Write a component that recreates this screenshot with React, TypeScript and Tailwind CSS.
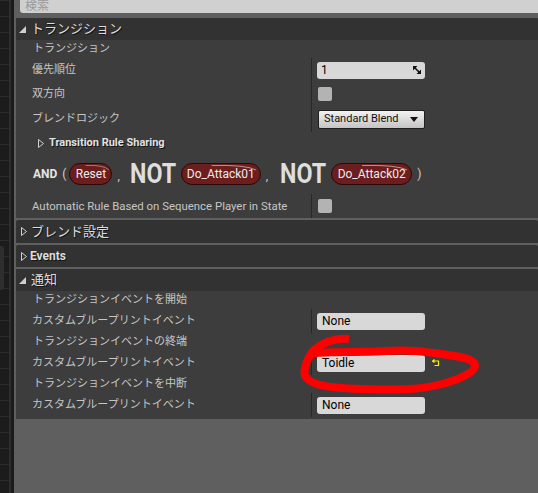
import type { ReactNode } from 'react'

const SHADOW = '[text-shadow:1px_1px_0_#151515]'

const MARK_POINTS: [number, number][] = [
  [349, 339], [337, 338], [313, 348], [303, 370], [307, 381], [330, 388],
  [393, 390], [427, 388], [457, 380], [475, 370], [475, 362], [463, 357],
  [427, 352], [403, 350], [370, 352], [337, 352], [313, 353],
]

function smoothPath(pts: [number, number][]) {
  let d = `M${pts[0][0]} ${pts[0][1]}`
  for (let i = 1; i < pts.length - 1; i++) {
    const [x, y] = pts[i]
    const mx = (x + pts[i + 1][0]) / 2
    const my = (y + pts[i + 1][1]) / 2
    d += ` Q${x} ${y} ${mx} ${my}`
  }
  const last = pts[pts.length - 1]
  return d + ` L${last[0]} ${last[1]}`
}

function OpenArrow() {
  return (
    <svg width="7" height="7" viewBox="0 0 7 7" className="shrink-0">
      <polygon points="7,0 7,7 0,7" fill="#cfcfcf" />
    </svg>
  )
}

function ClosedArrow() {
  return (
    <svg width="6" height="9" viewBox="0 0 6 9" className="shrink-0">
      <polygon points="0.5,0.5 5.5,4.5 0.5,8.5" fill="none" stroke="#cfcfcf" strokeWidth="1" />
    </svg>
  )
}

function SectionHeader({ title, open, bold, h = 'h-[22px]' }: { title: string; open?: boolean; bold?: boolean; h?: string }) {
  return (
    <div className={`flex ${h} items-center rounded-t-[2px] bg-[#323232] pl-[3px]`}>
      {open ? (
        <OpenArrow />
      ) : (
        <span className="ml-[2px] flex">
          <ClosedArrow />
        </span>
      )}
      <span
        className={`${open ? 'ml-[5px]' : bold ? 'ml-[3px]' : 'ml-[4px]'} ${
          bold ? 'text-[12px] font-bold' : 'text-[13px]'
        } text-[#dcdcdc] ${SHADOW}`}
      >
        {title}
      </span>
    </div>
  )
}

function PropRow({ label, h, children, labelSize = 'text-[11px]' }: { label: string; h: string; children?: ReactNode; labelSize?: string }) {
  return (
    <div className={`flex ${h}`}>
      <div className={`flex w-[295px] shrink-0 items-center pl-[16px] pt-[1px] ${labelSize} text-[#c6c6c6]`}>{label}</div>
      <div className="flex flex-1 items-center border-l border-[#272727] pl-[5px]">{children}</div>
    </div>
  )
}

function Checkbox() {
  return <div className="ml-[1px] h-[14px] w-[14px] rounded-[2px] bg-[#b3b3b3]" />
}

function ValueBox({ text }: { text: string }) {
  return (
    <div className="flex h-[17px] w-[108px] items-center rounded-[3px] bg-[#d8d8d8] pl-[5px] text-[12px] text-black">
      {text}
    </div>
  )
}

function Pill({ text, w }: { text: string; w: string }) {
  return (
    <div
      className={`relative flex h-[22px] ${w} items-center justify-center rounded-full border border-[#2a0808] bg-[#6c1d1d] text-[12px] leading-none text-[#ececec]`}
    >
      {text}
      <svg className="absolute inset-0 h-full w-full" viewBox="0 0 100 22" preserveAspectRatio="none">
        <path d="M38 1.6 Q82 0.8 95 6.5" fill="none" stroke="#e6d2d2" strokeOpacity="0.7" strokeWidth="1.1" />
      </svg>
    </div>
  )
}

function Not({ ml }: { ml: string }) {
  return (
    <span className={`${ml} inline-block w-[45px] overflow-visible whitespace-nowrap`}>
      <span className="inline-block origin-left scale-x-[0.86] text-[27px] font-bold leading-none text-[#dedede]">
        NOT
      </span>
    </span>
  )
}

function Comma() {
  return <span className="ml-[5px] translate-y-[2px] text-[#cfcfcf]">,</span>
}

function TransitionSection() {
  return (
    <div className="flex flex-col bg-[#3d3d3d]">
      <SectionHeader title="トランジション" open />
      <div className="flex h-[18px] items-center pl-[17px] text-[11px] text-[#c6c6c6]">トランジション</div>
      <PropRow label="優先順位" h="h-[24px]">
        <div className="flex h-[17px] w-[108px] items-center justify-between rounded-[3px] bg-[#d8d8d8] pl-[4px] pr-[4px] text-[12px] text-black">
          1
          <svg width="8" height="8" viewBox="0 0 8 8">
            <polygon points="0,0 4.5,0 0,4.5" fill="#111" />
            <polygon points="8,8 3.5,8 8,3.5" fill="#111" />
            <line x1="1" y1="1" x2="7" y2="7" stroke="#111" strokeWidth="1.6" />
          </svg>
        </div>
      </PropRow>
      <PropRow label="双方向" h="h-[24px]">
        <Checkbox />
      </PropRow>
      <PropRow label="ブレンドロジック" h="h-[26px]">
        <div className="ml-[1px] flex h-[19px] w-[107px] items-center justify-between rounded-[2px] border border-[#202020] bg-[linear-gradient(to_bottom,#f2f2f2,#c4c4c4)] pl-[5px] pr-[6px] text-[11px] text-[#111]">
          Standard Blend
          <svg width="8" height="5" viewBox="0 0 8 5">
            <polygon points="0,0 8,0 4,5" fill="#111" />
          </svg>
        </div>
      </PropRow>
      <div className="flex h-[22px] items-center pl-[22px]">
        <ClosedArrow />
        <span className={`ml-[5px] text-[11px] font-bold text-[#e2e2e2] ${SHADOW}`}>Transition Rule Sharing</span>
      </div>
      <div className="flex h-[40px] items-center pl-[17px] text-[12px] text-[#e4e4e4]">
        <span className="font-bold">AND</span>
        <span className="ml-[5px] text-[#cfcfcf]">(</span>
        <span className="ml-[3px]">
          <Pill text="Reset" w="w-[43px]" />
        </span>
        <Comma />
        <Not ml="ml-[10px]" />
        <span className="ml-[6px]">
          <Pill text="Do_Attack01" w="w-[80px]" />
        </span>
        <Comma />
        <Not ml="ml-[12px]" />
        <span className="ml-[6px]">
          <Pill text="Do_Attack02" w="w-[81px]" />
        </span>
        <span className="ml-[5px] text-[#cfcfcf]">)</span>
      </div>
      <PropRow label="Automatic Rule Based on Sequence Player in State" h="h-[24px]" labelSize="text-[11.4px]">
        <Checkbox />
      </PropRow>
    </div>
  )
}

function NotifySection() {
  return (
    <div className="flex flex-col bg-[#3d3d3d] pb-[2px]">
      <SectionHeader title="通知" open />
      <div className="flex h-[18px] items-center pl-[17px] pt-[1px] text-[11px] text-[#c6c6c6]">トランジションイベントを開始</div>
      <PropRow label="カスタムブループリントイベント" h="h-[24px]">
        <ValueBox text="None" />
      </PropRow>
      <div className="flex h-[18px] items-center pl-[17px] pt-[1px] text-[11px] text-[#c6c6c6]">トランジションイベントの終端</div>
      <PropRow label="カスタムブループリントイベント" h="h-[24px]">
        <ValueBox text="Toidle" />
        <svg width="8" height="8" viewBox="0 0 8 8" className="ml-[7px]">
          <path d="M2.5 0.5 L0.5 2 L2.5 3.5 M0.5 2 H6.5 V6.5 H2.5" fill="none" stroke="#f2f200" strokeWidth="1.2" />
        </svg>
      </PropRow>
      <div className="flex h-[18px] items-center pl-[17px] pt-[1px] text-[11px] text-[#c6c6c6]">トランジションイベントを中断</div>
      <PropRow label="カスタムブループリントイベント" h="h-[24px]">
        <ValueBox text="None" />
      </PropRow>
    </div>
  )
}

function LeftStrip() {
  return (
    <div className="flex w-[14px] shrink-0">
      <div className="relative w-[9px] bg-[#1c1c1c] bg-[linear-gradient(to_bottom,#2c2c2c_1px,transparent_1px)] bg-[length:100%_16px]">
        <div className="absolute left-0 top-[246px] h-[44px] w-[4px] rounded-r-[3px] bg-[#2e2e2e]" />
      </div>
      <div className="w-[2px] bg-[#2d2d2d]" />
      <div className="w-[3px] bg-[#1b1b1b]" />
    </div>
  )
}

export default function App() {
  return (
    <div className="relative flex h-[493px] w-[538px] overflow-hidden bg-[#5f5f5f] font-['Roboto','Noto_Sans_CJK_JP',sans-serif]">
      <LeftStrip />
      <div className="flex min-w-0 flex-1 flex-col">
        <div className="h-[18px] pl-[6px]">
          <div className="flex h-[13px] items-center overflow-hidden rounded-bl-[3px] bg-[#d0d0d0] pl-[5px]">
            <span className="-translate-y-[1px] text-[12px] leading-none text-[#9a9a9a]">検索</span>
          </div>
        </div>
        <div className="flex flex-col gap-[2px] pl-[2px]">
          <TransitionSection />
          <SectionHeader title="ブレンド設定" h="h-[23px]" />
          <SectionHeader title="Events" bold />
          <NotifySection />
        </div>
      </div>
      <svg className="pointer-events-none absolute inset-0" width="538" height="493" viewBox="0 0 538 493">
        <path
          d={smoothPath(MARK_POINTS)}
          fill="none"
          stroke="#ff0000"
          strokeWidth="8"
          strokeLinecap="butt"
          strokeLinejoin="round"
        />
      </svg>
    </div>
  )
}
